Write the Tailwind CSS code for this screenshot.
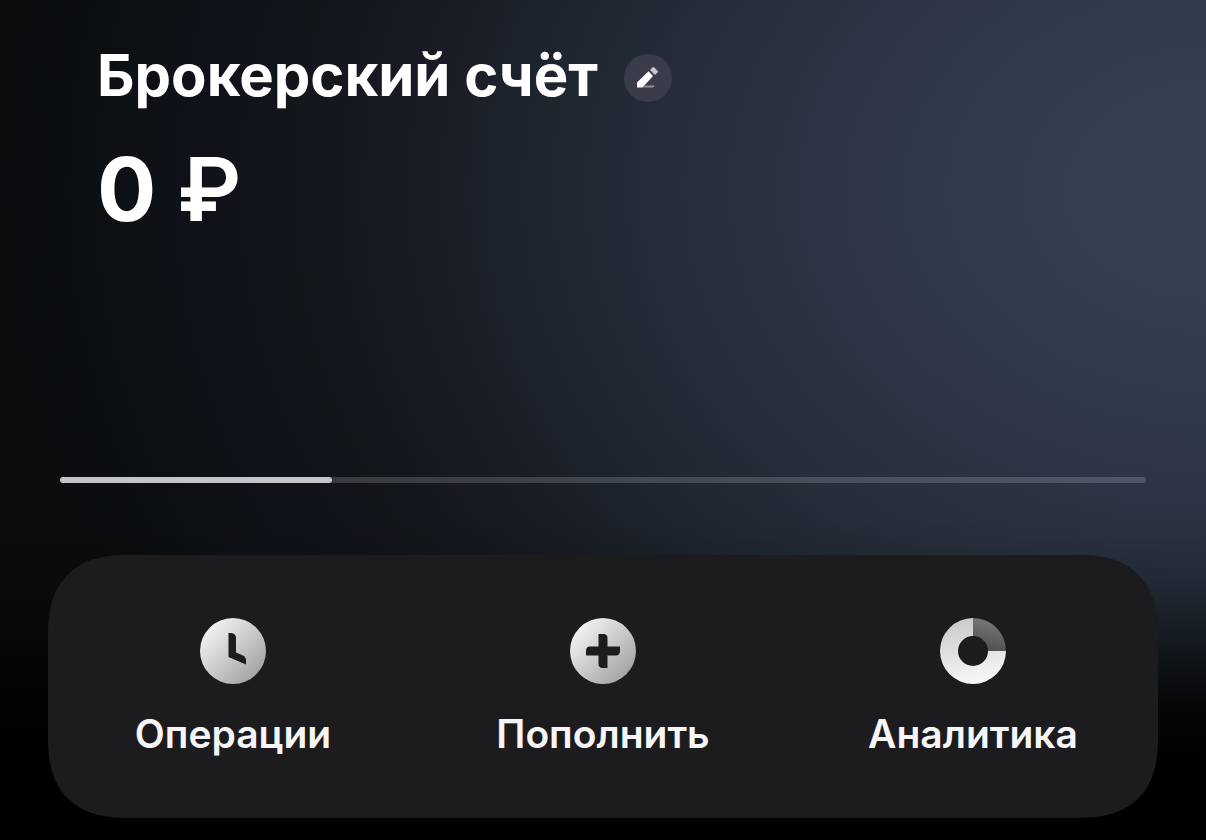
<!DOCTYPE html>
<html lang="ru">
<head>
    <meta charset="UTF-8">
    <meta name="viewport" content="width=device-width, initial-scale=1.0">
    <title>Брокерский счёт</title>
    <script src="https://cdn.jsdelivr.net/npm/@tailwindcss/browser@4"></script>
</head>
<body class="min-h-screen bg-black bg-[linear-gradient(to_bottom,transparent_520px,rgba(0,0,0,0.12)_580px,rgba(0,0,0,0.4)_640px,rgba(0,0,0,0.8)_700px,#000_770px),radial-gradient(ellipse_1206px_940px_at_100%_190px,#354051_0%,#333e50_12%,#303b4e_21%,#2f3649_28%,#2a3241_37%,#222b35_49%,#1d232d_58%,#191c25_65%,#13161b_75%,#0f1219_83%,#0c1013_92%,#0a0c0e_100%)] font-['Inter','Liberation_Sans',sans-serif] text-white">
    <main class="px-12 pt-10 pb-5">
        <header class="px-[49px]">
            <div class="flex items-center gap-[26px]">
                <h1 class="pb-1.5 text-[58px] leading-[70px] font-bold">Брокерский счёт</h1>
                <button type="button" aria-label="Переименовать счёт" class="flex size-12 items-center justify-center rounded-full bg-[#3a3d49]">
                    <svg class="size-6" viewBox="0 0 24 24" fill="none">
                        <path d="M9 19.500h9.500q0 2-2 2H7z" fill="#8d8f97"/>
                        <path d="M1 21.500v-5L12.500 5.200l4.500 4.800L6.500 21.500z" fill="#fff"/>
                        <path d="M14 4L16.700 1.300q.7-.7 1.400 0l3.600 3.600q.7.7 0 1.400l-2.700 2.700z" fill="#c6c7ce"/>
                    </svg>
                </button>
            </div>
            <p class="mt-5 text-[88px] leading-[106px] font-bold">0 <span class="font-semibold">₽</span></p>
        </header>

        <div role="progressbar" aria-valuenow="25" aria-valuemin="0" aria-valuemax="100" aria-label="Слайд" class="mx-3 mt-[235px] h-1.5 rounded-full bg-white/16">
            <div class="h-full w-1/4 rounded-full bg-[#c3c5c9]"></div>
        </div>

        <nav class="mt-[72px] grid grid-cols-3 rounded-[80px] bg-[#1c1c1e] pt-[63px] pb-[60px] text-[39px] leading-[48px] font-semibold text-[#f6f6f8] [corner-shape:superellipse(1.3)]">
            <button type="button" class="flex flex-col items-center gap-[26px]">
                <svg class="size-[66px]" viewBox="0 0 66 66">
                    <defs>
                        <linearGradient id="silver" x1="0" y1="0" x2="1" y2="1">
                            <stop offset="0.1" stop-color="#f6f6f7"/>
                            <stop offset="0.9" stop-color="#a0a0a3"/>
                        </linearGradient>
                    </defs>
                    <circle cx="33" cy="33" r="33" fill="url(#silver)"/>
                    <path d="M28.500 15H31q5 .5 5 5v14.500l7 3q3.500 1.800 3 6.500v2.500L28.500 39z" fill="#1c1c1e"/>
                </svg>
                Операции
            </button>
            <button type="button" class="flex flex-col items-center gap-[26px]">
                <svg class="size-[66px]" viewBox="0 0 66 66">
                    <circle cx="33" cy="33" r="33" fill="url(#silver)"/>
                    <path d="M28.500 16h5q4 .3 4 4v8.500H50v5q-.3 4-4 4h-8.500V50h-5q-4-.3-4-4v-8.500H16v-5q.3-4 4-4h8.500z" fill="#1c1c1e"/>
                </svg>
                Пополнить
            </button>
            <button type="button" class="flex flex-col items-center gap-[26px]">
                <svg class="size-[66px]" viewBox="0 0 66 66">
                    <defs>
                        <linearGradient id="ring" x1="0.3" y1="0" x2="0.5" y2="1">
                            <stop offset="0" stop-color="#cacacc"/>
                            <stop offset="1" stop-color="#f8f8f9"/>
                        </linearGradient>
                        <linearGradient id="slice" x1="0.6" y1="0" x2="0.4" y2="1">
                            <stop offset="0" stop-color="#7a7a7c"/>
                            <stop offset="1" stop-color="#505052"/>
                        </linearGradient>
                    </defs>
                    <path d="M33 0A33 33 0 1 0 66 33H48A15 15 0 1 1 33 18z" fill="url(#ring)"/>
                    <path d="M33 0A33 33 0 0 1 66 33H48A15 15 0 0 0 33 18z" fill="url(#slice)"/>
                </svg>
                Аналитика
            </button>
        </nav>
    </main>
</body>
</html>
